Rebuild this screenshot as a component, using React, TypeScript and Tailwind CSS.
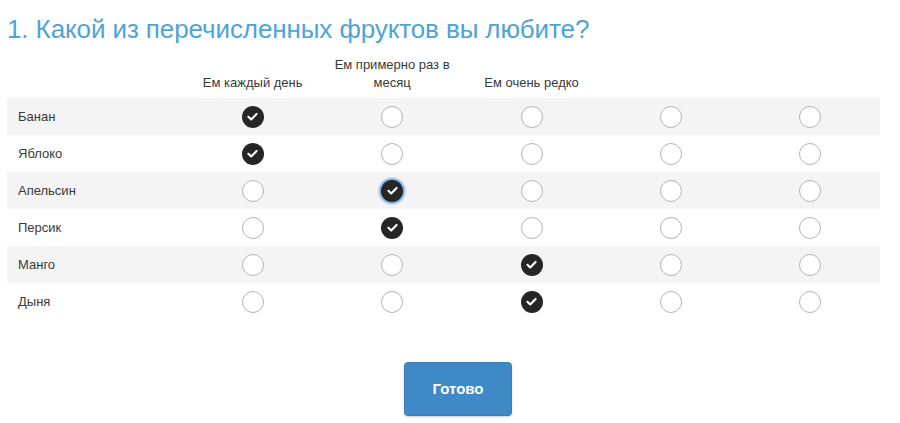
import React from "react";

const rows: { label: string; checked: number; focus?: boolean }[] = [
  { label: "Банан", checked: 0 },
  { label: "Яблоко", checked: 0 },
  { label: "Апельсин", checked: 1, focus: true },
  { label: "Персик", checked: 1 },
  { label: "Манго", checked: 2 },
  { label: "Дыня", checked: 2 },
];

const headers: string[][] = [
  ["Ем каждый день"],
  ["Ем примерно раз в", "месяц"],
  ["Ем очень редко"],
  [],
  [],
];

function Radio({ checked, focus }: { checked: boolean; focus?: boolean }) {
  if (checked) {
    return (
      <div
        className={
          "w-[22px] h-[22px] rounded-full bg-[#262626] flex items-center justify-center " +
          (focus ? "shadow-[0_0_2px_2px_rgba(70,150,220,0.75)]" : "")
        }
      >
        <svg width="13" height="13" viewBox="0 0 14 14">
          <path d="M2.6 7.3 L5.6 10.2 L11.4 4.2" fill="none" stroke="#fff" strokeWidth="2.3" strokeLinecap="round" strokeLinejoin="round" />
        </svg>
      </div>
    );
  }
  return <div className="w-[22px] h-[22px] rounded-full border-[1.5px] border-[#b5b5b5] bg-white" />;
}

export default function App() {
  return (
    <div className="w-[900px] h-[423px] bg-white font-['Liberation_Sans',Arial,sans-serif] relative overflow-hidden">
      <h1 className="pl-[7px] pt-[14px] text-[26px] leading-[30px] text-[#4ea3d8] font-normal tracking-[-0.1px]">
        1. Какой из перечисленных фруктов вы любите?
      </h1>
      <div className="ml-[7px] w-[873px] mt-[10px]">
        <div className="flex h-[44px]">
          <div className="w-[176px]" />
          {headers.map((h, i) => (
            <div key={i} className="flex-1 flex flex-col justify-end items-center text-[13px] leading-[18px] text-[#3a3a3a] pb-[6px]">
              {h.map((l, j) => (
                <div key={j}>{l}</div>
              ))}
            </div>
          ))}
        </div>
        {rows.map((r, ri) => (
          <div
            key={ri}
            className={"flex items-center h-[37px] " + (ri % 2 === 0 ? "bg-[#f4f4f4]" : "bg-white")}
          >
            <div className="w-[176px] pl-[11px] text-[13px] text-[#3a3a3a]">{r.label}</div>
            {[0, 1, 2, 3, 4].map((c) => (
              <div key={c} className="flex-1 flex justify-center">
                <Radio checked={r.checked === c} focus={r.focus && r.checked === c} />
              </div>
            ))}
          </div>
        ))}
      </div>
      <div className="flex justify-center mt-[42px] pl-[16px]">
        <button className="w-[108px] h-[54px] rounded-[4px] bg-[#3f89c6] border border-[#3a7db7] text-white text-[15px] font-bold shadow-[0_1px_2px_rgba(0,0,0,0.2)]">
          Готово
        </button>
      </div>
    </div>
  );
}
